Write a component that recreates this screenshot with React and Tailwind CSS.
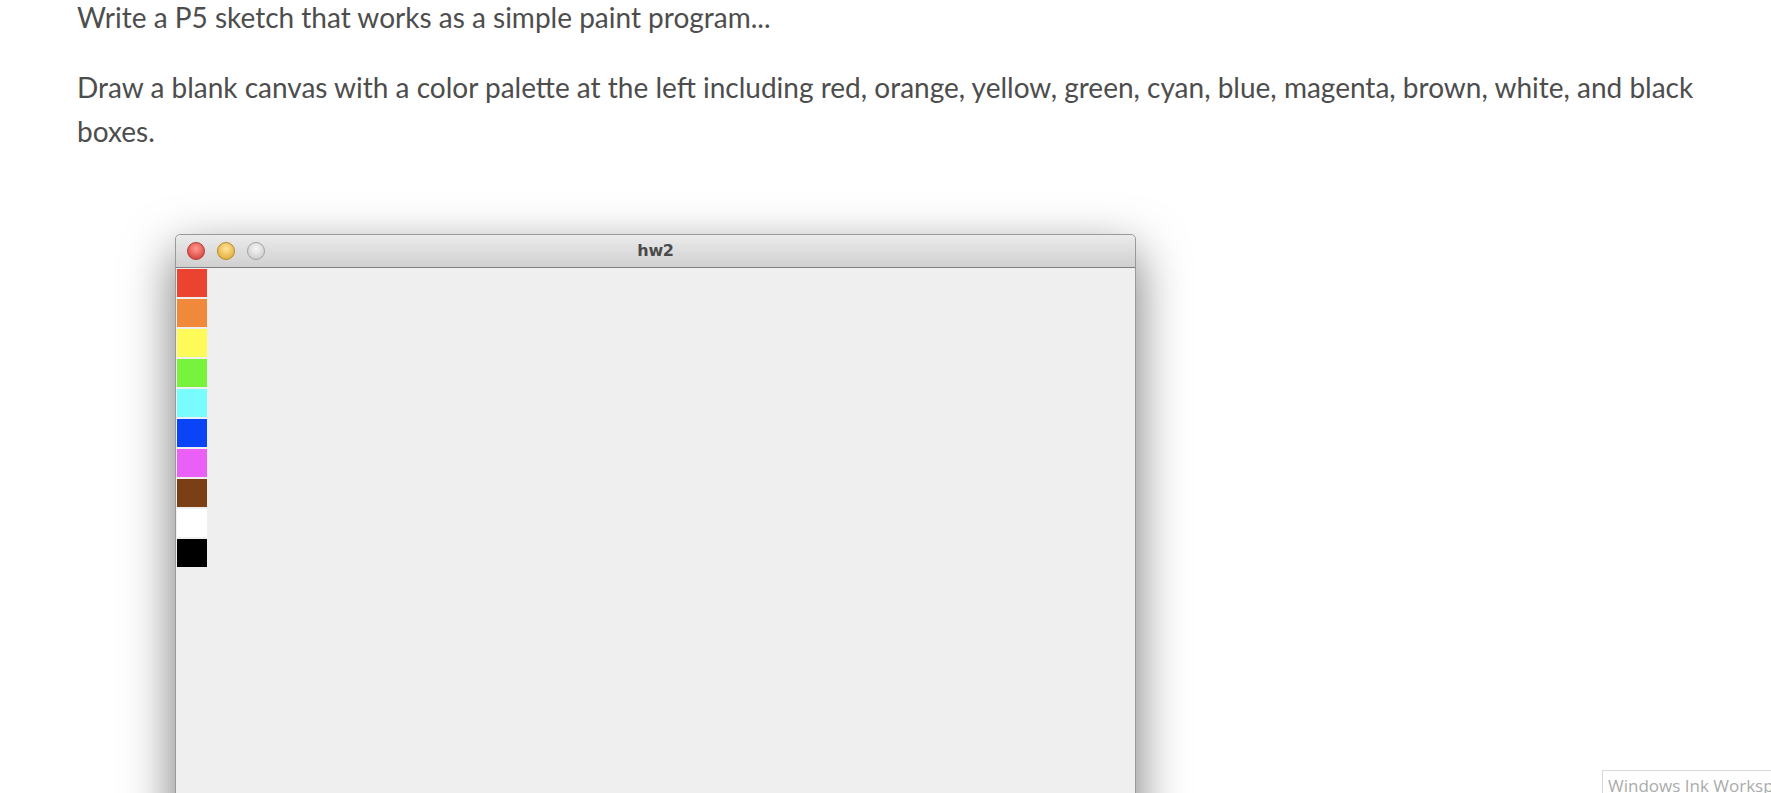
import React from 'react';

const swatches = ['#ea4330', '#f0893a', '#fefb58', '#78f33d', '#78fcfd', '#0945f6', '#ea5ff6', '#7a3f15', '#ffffff', '#000000'];

function TrafficLight({ from, to, ring }) {
    return (
        <span
            className="block w-[18px] h-[18px] rounded-full border"
            style={{ background: `radial-gradient(circle at 50% 35%, ${from}, ${to})`, borderColor: ring }}
        />
    );
}

export default function App() {
    return (
        <div className="min-h-screen bg-white overflow-hidden relative font-['Lato',sans-serif]">
            <div className="pl-[77px] w-[1730px] text-[28px] leading-[44px] text-[#4d4d4d]">
                <p className="-mt-[5px]">Write a P5 sketch that works as a simple paint program...</p>
                <p className="mt-[26px]">Draw a blank canvas with a color palette at the left including red, orange, yellow, green, cyan, blue, magenta, brown, white, and black boxes.</p>
            </div>

            <div className="ml-[175px] mt-[81px] w-[961px] h-[640px] border border-[#9a9a9a] rounded-t-[5px] bg-[#efefef] shadow-[0_18px_50px_rgba(0,0,0,0.55)] flex flex-col">
                {/* title bar */}
                <div className="relative h-[33px] shrink-0 flex items-center px-[11px] gap-[12px] bg-gradient-to-b from-[#ebebeb] to-[#d0d0d0] border-b border-[#7f7f7f] rounded-t-[5px]">
                    <TrafficLight from="#ff9a92" to="#d1312b" ring="#b33a34" />
                    <TrafficLight from="#ffe49a" to="#e0a227" ring="#b68a2a" />
                    <TrafficLight from="#f6f6f6" to="#c4c4c4" ring="#a3a3a3" />
                    <span className="absolute inset-0 flex items-center justify-center text-[16px] font-bold text-[#4a4a4a] font-['DejaVu_Sans',sans-serif] tracking-[-0.3px]">hw2</span>
                </div>
                {/* canvas */}
                <div className="flex flex-col pt-[1px] pl-[1px]">
                    {swatches.map((c) => (
                        <div key={c} className="w-[30px] h-[28px] mb-[2px]" style={{ background: c }} />
                    ))}
                </div>
            </div>

            <div className="absolute left-[1602px] top-[770px] w-[200px] h-[40px] border border-[#d8d8d8] bg-white pl-[5px] pt-[2px] text-[17px] text-[#ababab] font-['Open_Sans',sans-serif] whitespace-nowrap">
                Windows Ink Workspace
            </div>
        </div>
    );
}
